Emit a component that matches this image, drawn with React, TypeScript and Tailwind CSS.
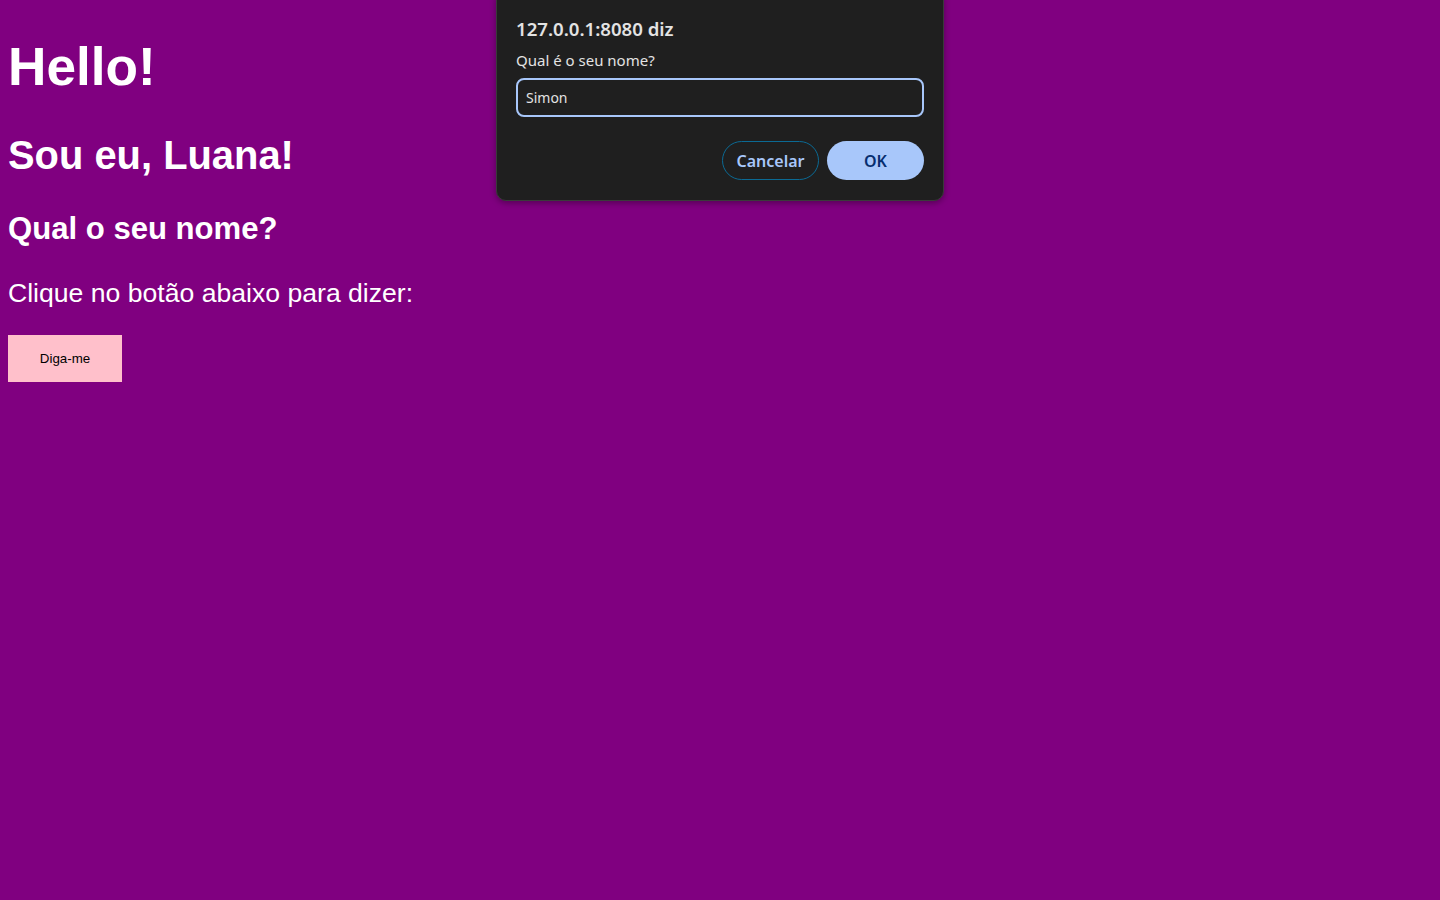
export default function App() {
  return (
    <div className="relative min-h-screen bg-[#800080] font-['Liberation_Sans',Arial,sans-serif] text-white">
      <main className="flow-root px-2">
        <h1 className="mt-[35.5px] text-[53.2px] leading-[61px] font-bold">Hello!</h1>
        <h2 className="mt-[35px] text-[39.9px] leading-[46px] font-bold">Sou eu, Luana!</h2>
        <h3 className="mt-[33.2px] text-[31.1px] leading-[36px] font-bold">Qual o seu nome?</h3>
        <p className="mt-[31.1px] text-[26.6px] leading-[30.6px]">Clique no botão abaixo para dizer:</p>
        <button className="mt-[26.6px] h-[47px] w-[114px] bg-[#ffc0cb] pt-[2px] text-[13.33px] text-black">
          Diga-me
        </button>
      </main>

      <PromptDialog />
    </div>
  )
}

function PromptDialog() {
  return (
    <div className="absolute top-[-10px] left-[496px] w-[448px] rounded-[10px] border border-[#3a3a3a] bg-[#1f1f1f] pt-[26px] pr-[19px] pb-5 pl-[19px] font-['Noto_Sans',sans-serif] shadow-[0_2px_6px_rgba(0,0,0,0.35)]">
      <div className="text-[18.6px] leading-6 font-semibold text-[#e3e3e3]">127.0.0.1:8080 diz</div>
      <div className="mt-[9px] text-[15px] leading-5 text-[#e3e3e3]">Qual é o seu nome?</div>
      <input
        readOnly
        value="Simon"
        className="mt-[8px] h-[39px] w-full rounded-lg border-2 border-[#a8c7fa] bg-[#1f1f1f] px-[8px] text-[14px] text-[#e3e3e3] outline-none"
      />
      <div className="mt-6 flex justify-end gap-2">
        <button className="h-[39px] w-[97px] rounded-full border border-[#0b6a94] text-[16px] font-semibold text-[#a8c7fa]">
          Cancelar
        </button>
        <button className="h-[39px] w-[97px] rounded-full bg-[#a8c7fa] text-[16px] font-semibold text-[#062e6f]">
          OK
        </button>
      </div>
    </div>
  )
}
